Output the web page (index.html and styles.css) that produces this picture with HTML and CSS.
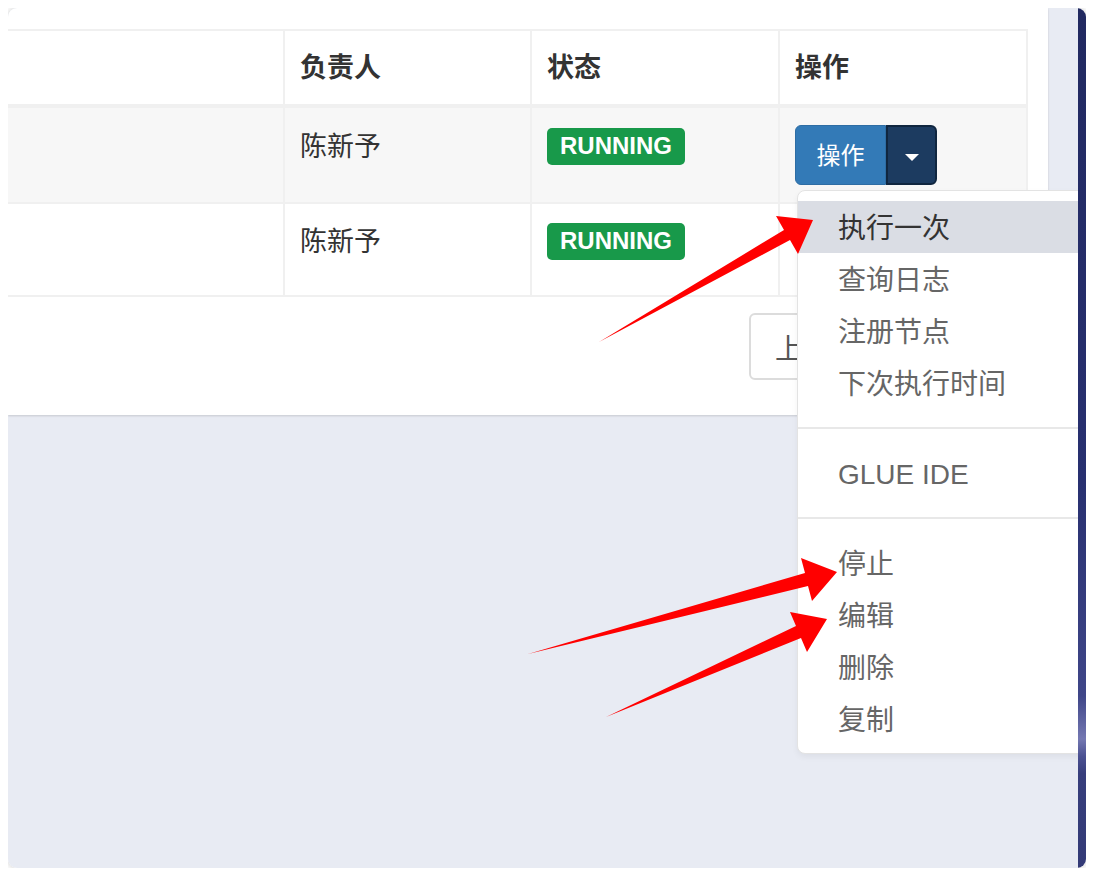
FILE: index.html
```html
<!DOCTYPE html>
<html lang="zh-CN">
<head>
<meta charset="utf-8">
<title>任务列表</title>
<link rel="stylesheet" href="styles.css">
</head>
<body>
<div class="frame">
  <div class="main">
    <div class="box">
      <div class="tbl">
        <div class="tr head">
          <div class="c c1"></div>
          <div class="c">负责人</div>
          <div class="c">状态</div>
          <div class="c">操作</div>
        </div>
        <div class="tr odd">
          <div class="c c1"></div>
          <div class="c txt">陈新予</div>
          <div class="c"><span class="badge">RUNNING</span></div>
          <div class="c">
            <div class="btn-group">
              <div class="btn-main">操作</div>
              <div class="btn-toggle"><span class="caret"></span></div>
              <ul class="menu">
                <li class="active">执行一次</li>
                <li>查询日志</li>
                <li>注册节点</li>
                <li>下次执行时间</li>
                <li class="divider"></li>
                <li>GLUE IDE</li>
                <li class="divider"></li>
                <li>停止</li>
                <li>编辑</li>
                <li>删除</li>
                <li>复制</li>
              </ul>
            </div>
          </div>
        </div>
        <div class="tr r2">
          <div class="c c1"></div>
          <div class="c txt">陈新予</div>
          <div class="c"><span class="badge">RUNNING</span></div>
          <div class="c"></div>
        </div>
      </div>
      <div class="pager">
        <button class="pg">上一页</button>
      </div>
    </div>
  </div>
  <div class="strip"></div>
</div>
<svg class="arrows" width="1094" height="876" viewBox="0 0 1094 876">
  <polygon points="599,342 784,230 776,216 813,220 798,254 790,240" fill="#ff0000"/>
  <polygon points="528,654 805,573 801,558 837,572 812,601 808,586" fill="#ff0000"/>
  <polygon points="606,717 796,626 790,612 827,619 807,652 801,638" fill="#ff0000"/>
</svg>
</body>
</html>
```
FILE: styles.css
```css
body {
  margin: 8px;
  background: #fff;
  font-family: "Liberation Sans", "Noto Sans CJK SC", sans-serif;
}

.frame {
  width: 1078px;
  height: 860px;
  display: flex;
  border-radius: 9px;
  overflow: hidden;
  box-shadow: 0 0 6px rgba(0, 0, 0, 0.22);
}

.main {
  flex: 1;
  background: #e8ebf3;
  overflow: hidden;
}

.box {
  width: 1040px;
  height: 407px;
  box-sizing: border-box;
  padding-top: 21px;
  background: #fff;
  box-shadow: 0 1px 2px rgba(0, 0, 0, 0.15);
}

.tbl {
  width: 1020px;
  box-sizing: border-box;
  border-top: 2px solid #f0f0f0;
  border-right: 2px solid #f0f0f0;
}

.tr {
  display: grid;
  grid-template-columns: 275px 247px 248px 248px;
  border-bottom: 2px solid #f0f0f0;
}

.tr.head {
  border-bottom-width: 4px;
}

.tr.odd {
  background: #f7f7f7;
}

.tr.r2 {
  height: 91px;
}

.c {
  padding: 17px 15px;
  line-height: 40px;
  font-size: 27px;
  color: #333;
  border-left: 2px solid #f0f0f0;
}

.c1 {
  border-left: none;
}

.head .c {
  padding: 17px 15px 16px;
  font-weight: bold;
}

.c.txt {
  padding-top: 19px;
  padding-bottom: 15px;
}

.r2 .c {
  padding-top: 16px;
}

.r2 .c.txt {
  padding-top: 18px;
}

.badge {
  display: block;
  width: fit-content;
  margin-top: 3px;
  padding: 6px 13px 7px;
  background: #18994a;
  color: #fff;
  font-family: "Liberation Sans", sans-serif;
  font-weight: bold;
  font-size: 24px;
  line-height: 24px;
  border-radius: 5px;
}

.btn-group {
  position: relative;
  display: flex;
  width: fit-content;
}

.btn-main {
  width: 91px;
  height: 60px;
  box-sizing: border-box;
  display: flex;
  align-items: center;
  justify-content: center;
  padding-top: 2px;
  background: #337ab7;
  border: 1px solid #2e6da4;
  border-radius: 6px 0 0 6px;
  color: #fff;
  font-size: 24px;
  line-height: 1;
}

.btn-toggle {
  width: 51px;
  height: 60px;
  box-sizing: border-box;
  display: flex;
  align-items: center;
  justify-content: center;
  background: #1c3b60;
  border: 2px solid #10263f;
  border-radius: 0 6px 6px 0;
}

.caret {
  width: 0;
  height: 0;
  margin-top: 4px;
  border-top: 7px solid #fff;
  border-left: 7px solid transparent;
  border-right: 7px solid transparent;
}

.menu {
  position: absolute;
  left: 2px;
  top: 65px;
  z-index: 2;
  width: 340px;
  margin: 0;
  padding: 10px 0 8px;
  list-style: none;
  background: #fff;
  border: 1px solid #e3e3e3;
  border-radius: 8px;
  box-shadow: 0 3px 6px rgba(0, 0, 0, 0.05);
}

.menu li {
  padding: 8px 40px 4px;
  line-height: 40px;
  font-size: 28px;
  color: #666;
  white-space: nowrap;
}

.menu li.active {
  background: #dadde4;
  color: #333;
}

.menu li.divider {
  height: 2px;
  padding: 0;
  margin: 18px 0;
  background: #e8e8e8;
}

.pager {
  display: flex;
  margin-top: 16px;
  padding-left: 741px;
}

.pg {
  height: 67px;
  padding: 0 24px;
  background: #fff;
  border: 2px solid #dcdcdc;
  border-radius: 6px;
  font-family: "Liberation Sans", "Noto Sans CJK SC", sans-serif;
  font-size: 28px;
  color: #555;
}

.strip {
  width: 8px;
  background: linear-gradient(to bottom, #212960 0%, #283070 55%, #3f4688 80%, #7478b2 85%, #4b5192 87%, #373e7c 89%, #333a76 100%);
}

.arrows {
  position: absolute;
  left: 0;
  top: 0;
  z-index: 10;
  pointer-events: none;
}
```
